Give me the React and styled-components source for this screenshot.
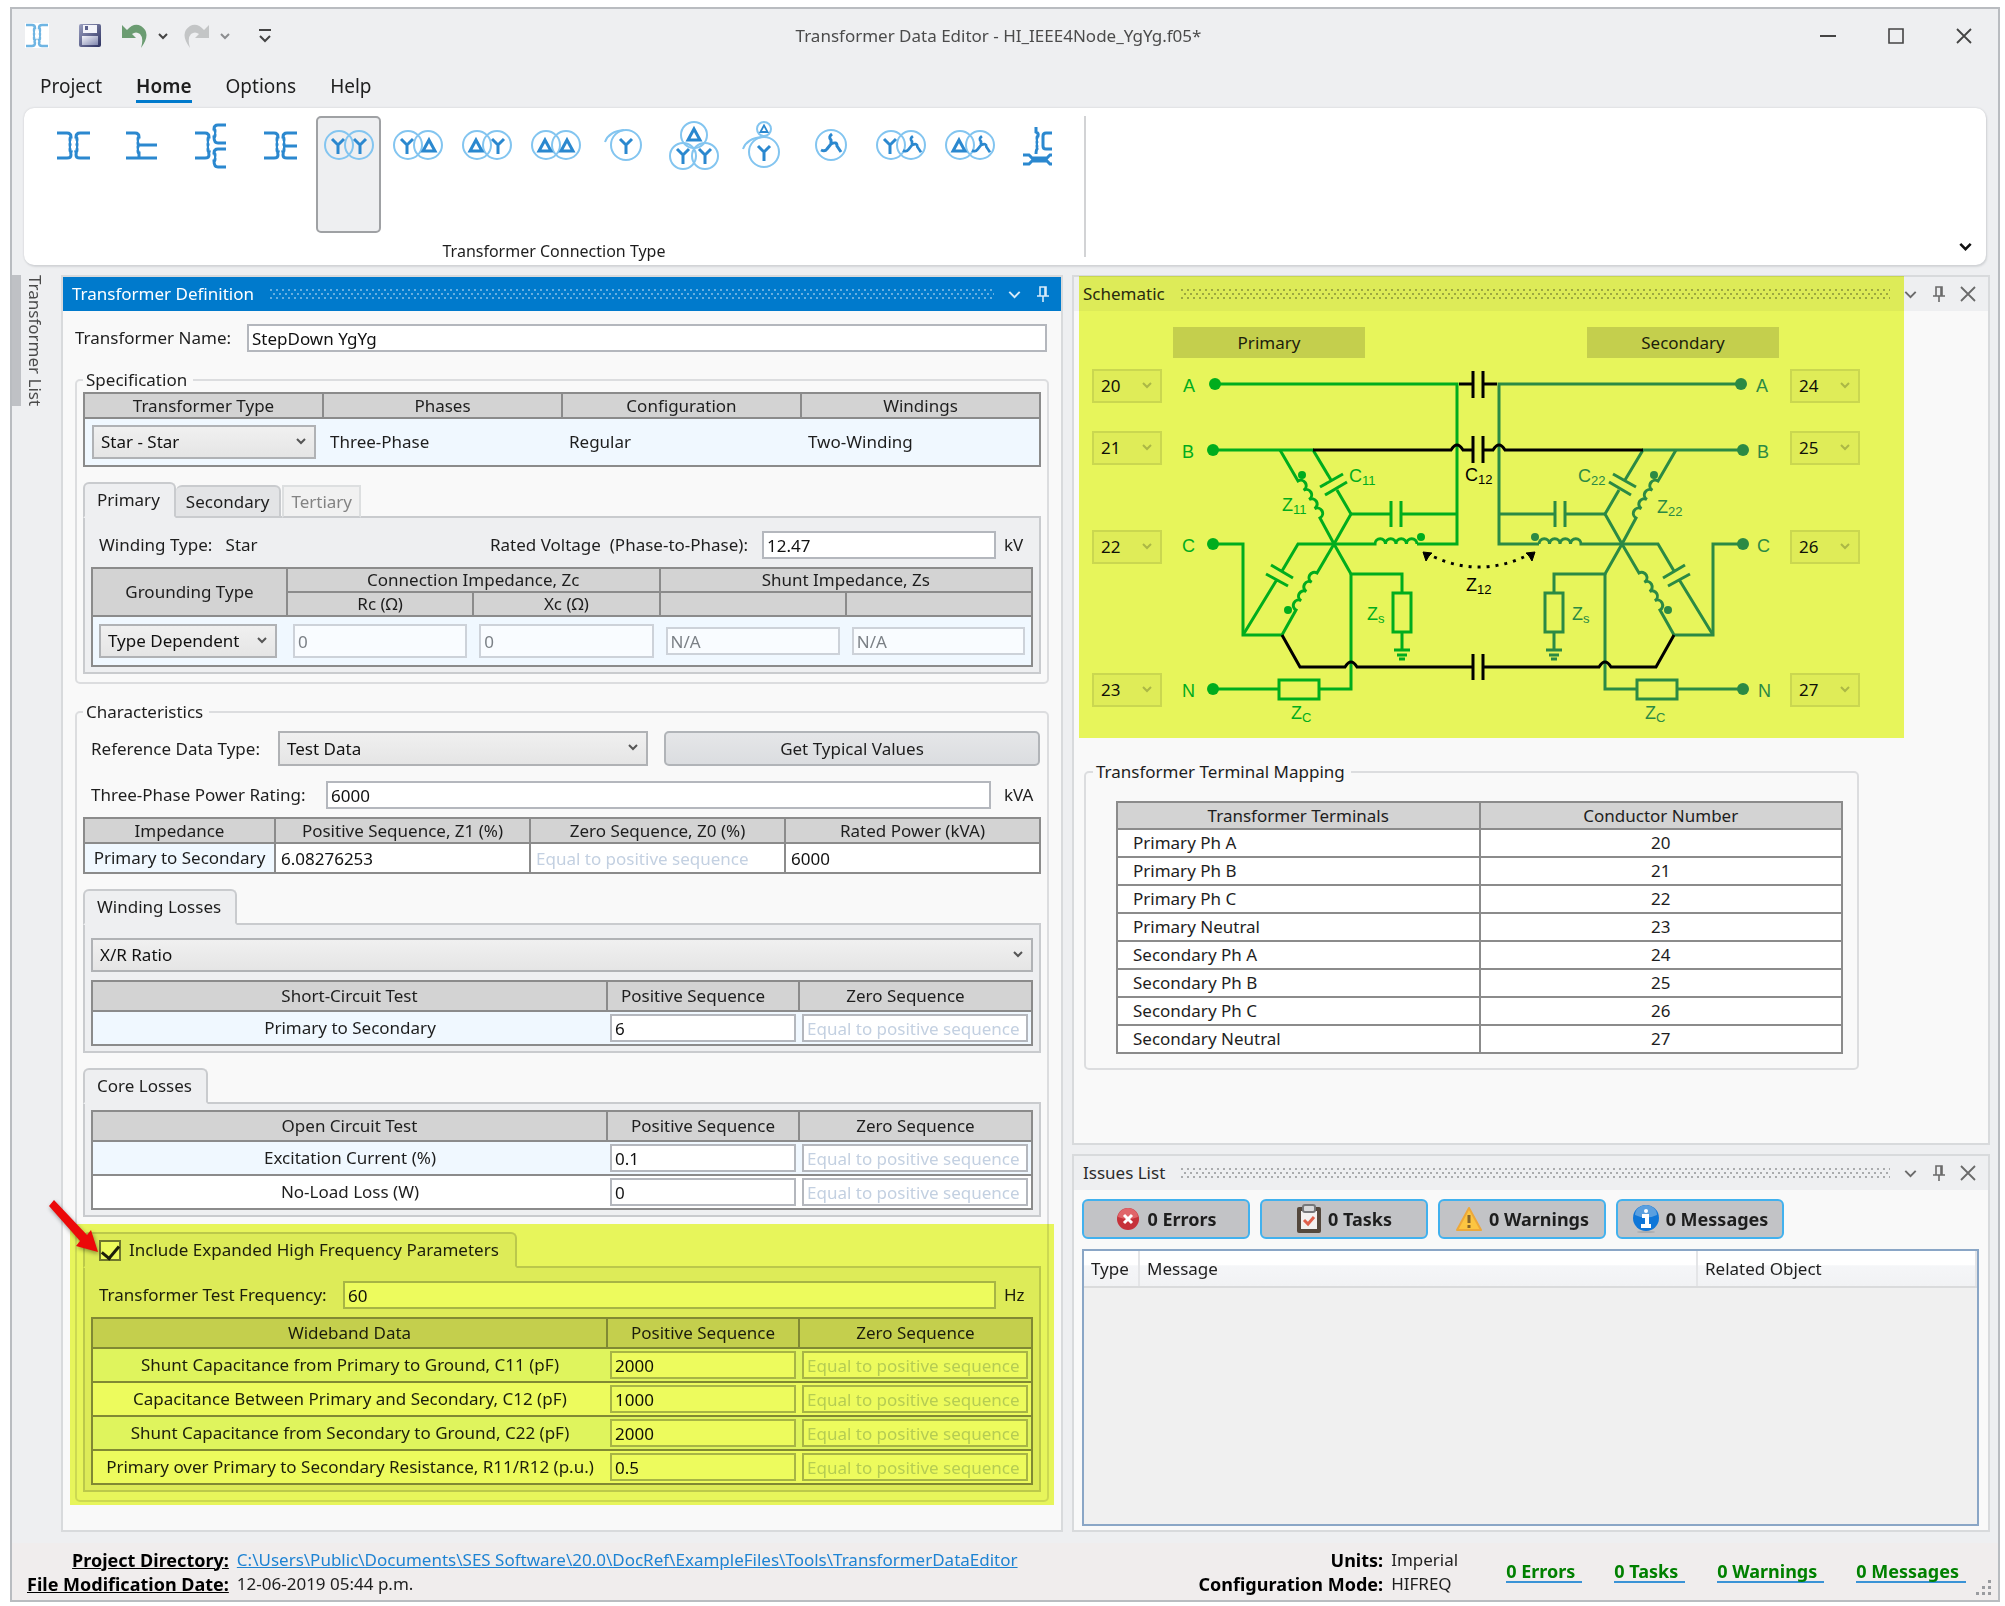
import React from 'react';
import styled, { createGlobalStyle, css } from 'styled-components';

const GlobalStyle = createGlobalStyle`
  * {
    box-sizing: border-box;
  }
  body {
    margin: 0;
    background: #fff;
    color: #1e1e1e;
    font: 17px/24px 'Noto Sans', 'Open Sans', sans-serif;
  }
  button, input, select {
    margin: 0;
    font: inherit;
    color: inherit;
  }
`;

const Window = styled.div`
  display: flex;
  flex-direction: column;
  min-height: calc(100vh - 11px);
  margin: 7px 5px 4px 10px;
  border: 2px solid #b9bcc0;
  background: #eeeff1;
`;

/* ---------- title bar ---------- */

const TitleBar = styled.header`
  display: grid;
  grid-template-columns: 1fr auto 1fr;
  align-items: center;
  height: 53px;
  padding: 0 26px 0 13px;
`;

const Title = styled.h1`
  margin: 0;
  font-size: 17px;
  font-weight: 400;
  color: #4b4b4b;
`;

const QuickAccess = styled.div`
  display: flex;
  align-items: center;
`;

const WindowButtons = styled.div`
  display: flex;
  justify-content: flex-end;
  gap: 52px;
`;

const IconButton = styled.button`
  display: flex;
  padding: 0;
  margin-left: ${props => props.$space || 0}px;
  border: 0;
  background: none;
  color: ${props => props.$color || '#444'};
`;

const Tabs = styled.nav`
  display: flex;
  gap: 34px;
  padding: 12px 28px 5px;
`;

const TabLink = styled.button`
  padding: 0 0 2px;
  border: 0;
  border-bottom: 3px solid ${props => (props.$active ? '#007acc' : 'transparent')};
  background: none;
  font-size: 19px;
  line-height: 24px;
  font-weight: ${props => (props.$active ? 600 : 400)};
`;

/* ---------- ribbon ---------- */

const Ribbon = styled.section`
  display: flex;
  justify-content: space-between;
  margin: 0 12px 10px;
  height: 157px;
  padding: 8px 14px 8px 0;
  border-radius: 10px;
  background: #fff;
  box-shadow: 0 0 2px #c4c6ca, 1px 2px 2px #d5d7da;
`;

const RibbonGroup = styled.div`
  display: flex;
  flex-direction: column;
  width: 1062px;
  border-right: 2px solid #d2d3d5;
`;

const RibbonItems = styled.div`
  display: flex;
  gap: 4px;
  padding-left: 16px;
`;

const RibbonButton = styled.button`
  display: flex;
  align-items: flex-start;
  justify-content: center;
  width: 65px;
  height: 117px;
  padding: 2px 0 0;
  border: 2px solid transparent;
  border-radius: 5px;
  background: none;
  ${props =>
    props.$selected &&
    css`
      border-color: #9fa1a4;
      background: #eeeff1;
    `}
`;

const RibbonLabel = styled.div`
  padding-top: 6px;
  font-size: 16px;
  line-height: 24px;
  text-align: center;
`;

const RibbonToggle = styled(IconButton)`
  align-self: flex-end;
  padding-bottom: 4px;
`;

/* ---------- docking layout ---------- */

const Workspace = styled.main`
  display: grid;
  grid-template-columns: 49px minmax(0, 1002fr) minmax(0, 927fr);
  flex: 1;
  padding-right: 8px;
`;

const SideTab = styled.button`
  align-self: start;
  justify-self: start;
  padding: 0 0 0 2px;
  border: 0;
  border-left: 9px solid #bfc1c5;
  background: none;
  writing-mode: vertical-rl;
  line-height: 24px;
  color: #4b4b4b;
`;

const RightColumn = styled.div`
  display: flex;
  flex-direction: column;
  gap: 9px;
  margin-left: 9px;
`;

const Panel = styled.section`
  position: relative;
  display: flex;
  flex-direction: column;
  flex: ${props => (props.$grow ? 1 : 'none')};
  border: 2px solid #d8dadc;
  background: #f9f9f9;
`;

const PanelHeader = styled.header`
  display: flex;
  align-items: center;
  height: 34px;
  padding: 0 12px 0 9px;
  background: ${props => (props.$active ? '#007acc' : '#eeeff1')};
  color: ${props => (props.$active ? '#fff' : '#2b2b2b')};
`;

const PanelTitle = styled.h2`
  margin: 0;
  font-size: 17px;
  font-weight: 400;
`;

const Grip = styled.div`
  --dot: ${props => (props.$active ? '#66aee0' : '#a9abad')};
  flex: 1;
  height: 10px;
  margin: 0 14px 0 16px;
  background-image: radial-gradient(circle at 1px 1px, var(--dot) 1px, transparent 1px),
    radial-gradient(circle at 1px 1px, var(--dot) 1px, transparent 1px);
  background-size: 6px 8px;
  background-position: 0 0, 3px 4px;
`;

const DefinitionBody = styled.div`
  display: flex;
  flex-direction: column;
  gap: 16px;
  padding: 13px 12px 28px;
`;

const Highlight = styled.div`
  position: absolute;
  background: #edfb5d;
  mix-blend-mode: multiply;
  pointer-events: none;
`;

const ParameterHighlight = styled(Highlight)`
  inset: -8px -13px -13px;
`;

const SchematicHighlight = styled(Highlight)`
  top: -1px;
  left: 5px;
  width: 825px;
  height: 462px;
`;

/* ---------- form parts ---------- */

const Group = styled.fieldset`
  min-width: 0;
  margin: 0;
  padding: ${props => props.$top || 0}px 6px 8px;
  border: 2px solid #dcdddf;
  border-radius: 5px;
`;

const Legend = styled.legend`
  padding: 0 6px 0 3px;
  line-height: 24px;
`;

const Row = styled.div`
  display: flex;
  align-items: center;
  padding: 0 ${props => props.$end || 0}px 0 ${props => props.$inset || 0}px;
  margin-bottom: ${props => props.$after || 0}px;
`;

const Label = styled.label`
  flex: none;
  width: ${props => (props.$width ? `${props.$width}px` : 'auto')};
  margin-right: ${props => (props.$width ? 0 : 14)}px;
`;

const Value = styled.span`
  flex: 1;
`;

const Unit = styled.span`
  width: ${props => (props.$wide ? 37 : 29)}px;
  margin-left: ${props => (props.$wide ? 13 : 8)}px;
`;

const TextBox = styled.input`
  flex: ${props => (props.$width ? 'none' : 1)};
  width: ${props => (props.$width ? `${props.$width}px` : '100%')};
  min-width: 0;
  height: 28px;
  padding: 0 2px 0 3px;
  border: 2px solid #b4b7bd;
  background: #fff;
  color: #111;

  &::placeholder {
    color: #c3d0e1;
    opacity: 1;
  }
  &:disabled {
    height: ${props => (props.$tall ? 34 : 28)}px;
    border-color: #cdd2d9;
    background: #f9fcff;
    color: #7b8086;
  }
`;

const SelectWrap = styled.span`
  position: relative;
  display: block;
  flex: none;
  width: ${props => (props.$width ? `${props.$width}px` : '100%')};
  height: ${props => props.$height || 34}px;

  svg {
    position: absolute;
    top: 11px;
    right: 10px;
    pointer-events: none;
    color: ${props => (props.$disabled ? '#b9bbbd' : '#555')};
  }
`;

const NativeSelect = styled.select`
  appearance: none;
  width: 100%;
  height: 100%;
  padding: 0 24px 0 7px;
  border: 2px solid #b0b2b5;
  border-radius: 0;
  background: linear-gradient(#f0f0f0, #e5e5e5);
  color: #111;

  &:disabled {
    border-color: #dadbdc;
    background: #f0f0f0;
    opacity: 1;
  }
`;

const PushButton = styled.button`
  flex: 1;
  height: 35px;
  margin-left: 16px;
  border: 2px solid #b1b4b8;
  border-radius: 5px;
  background: linear-gradient(#e5e6e8, #dbdde0);
`;

const TabStrip = styled.div`
  position: relative;
  display: flex;
  align-items: flex-end;
  height: 36px;
  margin: 15px 0 -2px;
`;

const PageTab = styled.button`
  height: ${props => (props.$active ? 36 : 33)}px;
  padding: ${props => (props.$active ? '0 14px 0 12px' : '0 10px')};
  border: 2px solid #c9cbce;
  border-bottom-color: ${props => (props.$active ? '#eeeff1' : '#c9cbce')};
  border-left-width: ${props => (props.$follows ? 0 : 2)}px;
  border-radius: 6px 6px 0 0;
  background: ${props => (props.$active ? '#eeeff1' : '#e3e4e6')};

  &:disabled {
    height: 33px;
    padding: 0 7px;
    margin-left: 1px;
    border-color: #dddfe0 #dddfe0 #c9cbce;
    border-radius: 0;
    background: #f1f1f1;
    color: #838383;
  }
`;

const CheckTab = styled.div`
  display: flex;
  align-items: center;
  height: 36px;
  padding: 0 16px 0 14px;
  border: 2px solid #c9cbce;
  border-bottom-color: #eeeff1;
  border-radius: 6px 6px 0 0;
  background: #eeeff1;
`;

const CheckBox = styled.input`
  appearance: none;
  display: flex;
  justify-content: center;
  width: 22px;
  height: 21px;
  margin-right: 8px;
  border: 2px solid #77797b;
  background: #fff;

  &:checked::after {
    content: '';
    width: 8px;
    height: 14px;
    border: solid #1e1e1e;
    border-width: 0 3px 3px 0;
    transform: rotate(40deg);
  }
`;

const TabPage = styled.div`
  padding: ${props => (props.$tight ? 6 : 13)}px 6px 5px;
  border: 2px solid #c9cbce;
  background: #eeeff1;
`;

const ParameterSection = styled.div`
  position: relative;
`;

/* ---------- tables ---------- */

const Grid = styled.table`
  width: 100%;
  table-layout: fixed;
  border-collapse: collapse;
  border: 2px solid #8b8b8b;

  th {
    height: ${props => props.$head || 25}px;
    padding: 0;
    border: 2px solid #8b8b8b;
    background: #d3d3d3;
    font-weight: 400;
    line-height: 22px;
    text-align: center;
  }
  td {
    height: ${props => props.$row || 34}px;
    padding: 0 ${props => props.$cellPad || 0}px;
    border: solid #8b8b8b;
    border-width: 2px ${props => (props.$ruled ? 2 : 0)}px;
    text-align: ${props => props.$align || 'left'};
    line-height: 24px;
  }
  tbody tr {
    background: #fff;
  }
  tbody tr:nth-child(odd) {
    background: ${props => (props.$plain ? '#fff' : '#f0f8ff')};
  }
`;

const Col = styled.col`
  width: ${props => props.$w};
`;

const ImpedanceGrid = styled(Grid)`
  td:first-child {
    text-align: center;
  }
  td + td {
    background: #fff;
  }
  input {
    display: block;
    border-color: transparent;
  }
`;

const SequenceGrid = styled(Grid)`
  th + th {
    padding-right: ${props => (props.$offset ? 20 : 0)}px;
  }
  td:first-child {
    text-align: center;
  }
  td + td {
    padding: 0 3px;
    text-align: left;
  }
  input {
    display: block;
  }
`;

const Spaced = styled.div`
  margin-bottom: 8px;
`;

/* ---------- schematic ---------- */

const Captions = styled.div`
  display: flex;
  justify-content: space-between;
  width: 768px;
  margin: 16px 0 3px 18px;
  padding: 0 81px;
`;

const Caption = styled.div`
  width: 192px;
  line-height: 31px;
  text-align: center;
  background: #d3d3d3;
`;

const Diagram = styled.div`
  display: flex;
  width: 768px;
  margin: 0 0 30px 18px;
`;

const Terminals = styled.div`
  display: grid;
  grid-template-rows: 62px 99px 143px 34px;
  width: 70px;
  padding-top: 8px;
`;

const MappingGroup = styled(Group)`
  width: 775px;
  margin: 0 0 73px 10px;
  padding: 0 7px 14px;
`;

const MappingGrid = styled(Grid)`
  width: calc(100% - 30px);
  margin: 17px 7px 0 23px;

  td {
    padding-left: 15px;
  }
  td + td {
    padding: 0;
    text-align: center;
  }
`;

/* ---------- issues ---------- */

const IssueFilters = styled.div`
  display: flex;
  gap: 10px;
  padding: 9px 8px 10px;
`;

const IssueButton = styled.button`
  display: flex;
  align-items: center;
  justify-content: center;
  gap: 6px;
  width: 168px;
  height: 40px;
  padding: 0;
  border: 2px solid #41b1ee;
  border-radius: 6px;
  background: #c2c3c6;
  font-weight: 700;
  font-size: 18px;
`;

const IssueList = styled.div`
  flex: 1;
  margin: 0 9px 4px 8px;
  border: 2px solid #8aa6c6;
  background: #f0f0f0;
`;

const IssueTable = styled.table`
  width: 100%;
  table-layout: fixed;
  border-collapse: collapse;

  th {
    height: 36px;
    padding: 0 7px;
    border-right: 2px solid #e4e5e7;
    border-bottom: 2px solid #dadbdc;
    background: linear-gradient(#fff 40%, #f5f6f8 42%, #f1f2f4);
    font-weight: 400;
    text-align: left;
  }
`;

/* ---------- status bar ---------- */

const StatusBar = styled.footer`
  display: flex;
  align-items: center;
  height: 57px;
  margin-top: 11px;
  padding: 0 6px 0 15px;
  background: #f0eded;
`;

const Facts = styled.dl`
  display: grid;
  grid-template-columns: auto auto;
  column-gap: 8px;
  margin: 0;
  margin-right: ${props => (props.$fill ? 'auto' : 0)};

  dt {
    font-weight: 700;
    font-size: 18px;
    text-align: right;
    text-decoration: ${props => (props.$fill ? 'underline' : 'none')};
    color: #000;
  }
  dd {
    margin: 0;
  }
  a {
    color: #1e83d3;
  }
`;

const StatusLinks = styled.div`
  display: flex;
  gap: 32px;
  margin-left: 48px;
`;

const StatusLink = styled.a`
  padding-right: 7px;
  border-bottom: 2px solid #3a93d6;
  font-weight: 700;
  font-size: 18px;
  line-height: 20px;
  color: #008000;
  text-decoration: none;
`;

const SizeGrip = styled.svg`
  align-self: flex-end;
  margin: 0 0 4px 10px;
`;

/* ---------- small drawings ---------- */

const Chevron = ({ size = 10, weight = 2 }) => (
  <svg width={size} height={size} viewBox="0 0 10 10" fill="none" stroke="currentColor" strokeWidth={weight}>
    <path d="M1 3l4 4 4-4" />
  </svg>
);

const Pin = () => (
  <svg width="12" height="18" viewBox="0 0 12 18" fill="none" stroke="currentColor" strokeWidth="1.6">
    <path d="M3 11V2h6v9M0 11h12M6 11v6M8 2v9" />
  </svg>
);

const Cross = ({ size = 16 }) => (
  <svg width={size} height={size} viewBox="0 0 16 16" stroke="currentColor" strokeWidth="1.8">
    <path d="M1 1l14 14M15 1L1 15" />
  </svg>
);

const AppIcon = () => (
  <svg width="24" height="25" viewBox="0 0 24 25" fill="none" stroke="#6fb5e3" strokeWidth="2.4">
    <rect width="24" height="25" fill="#fff" stroke="none" />
    <path d="M1 2h6q3 0 3 3a1 2 0 0 0 0 4a1 2 0 0 0 0 4a1 2 0 0 0 0 4a1 2 0 0 0 0 3q0 3-3 3H1" />
    <path d="M23 2h-6q-3 0-3 3a1 2 0 0 1 0 4a1 2 0 0 1 0 4a1 2 0 0 1 0 4a1 2 0 0 1 0 3q0 3 3 3h6" />
  </svg>
);

const SaveIcon = () => (
  <svg width="22" height="23" viewBox="0 0 22 23">
    <defs>
      <linearGradient id="disk" x1="0" x2="1" y1="0" y2="1">
        <stop offset="0" stopColor="#9a9fc0" />
        <stop offset="1" stopColor="#2c3160" />
      </linearGradient>
      <linearGradient id="plate" x1="0" x2="1" y1="0" y2="1">
        <stop offset="0" stopColor="#f4f5fb" />
        <stop offset="1" stopColor="#7f86ae" />
      </linearGradient>
    </defs>
    <rect width="22" height="23" rx="2" fill="url(#disk)" />
    <rect x="4" y="1" width="14" height="8" fill="#f3f4fa" />
    <rect x="6" y="2" width="3" height="4" fill="#5a608c" />
    <rect x="3" y="12" width="16" height="9" fill="url(#plate)" />
  </svg>
);

const Turn = ({ flip }) => (
  <svg width="25" height="24" viewBox="0 0 25 24">
    <path
      transform={flip ? 'translate(25 0) scale(-1 1)' : undefined}
      fill="currentColor"
      d="M0 1l5 5Q12-2 19 2q11 7 0 22 3-10-1-14-4-3-8 0l4 4H0z"
    />
  </svg>
);

const PALE = '#83c5f0';
const DEEP = '#2b88cf';

const Ring = ({ x, y, r = 14 }) => <circle cx={x} cy={y} r={r} stroke={PALE} strokeWidth="2" />;

const Wye = ({ x, y }) => (
  <path transform={`translate(${x} ${y})`} d="M-6-6L0 0l6-6M0 0v9" stroke={DEEP} strokeWidth="3" />
);

const Delta = ({ x, y, k = 1 }) => (
  <path transform={`translate(${x} ${y}) scale(${k})`} d="M0-6l6 11H-6z" stroke={DEEP} strokeWidth="3" />
);

const Zigzag = ({ x, y, k = 1 }) => (
  <path
    transform={`translate(${x} ${y}) scale(${k})`}
    d="M1-11Q-3-8 0-5V-1L-4 4Q-6 7-10 5M0-1Q6-4 6 1L10 7"
    stroke={DEEP}
    strokeWidth="3"
  />
);

const LEFT_COIL = 'M9 13h10q4 0 4 4a1 2.500 0 0 0 0 5a1 2.500 0 0 0 0 5a1 2.500 0 0 0 0 5a1 2.500 0 0 0 0 3q0 3-4 3H9';
const RIGHT_COIL = 'M42 13H32q-4 0-4 4a1 2.500 0 0 1 0 5a1 2.500 0 0 1 0 5a1 2.500 0 0 1 0 5a1 2.500 0 0 1 0 3q0 3 4 3h10';

const Lines = ({ d }) => <path d={d} stroke={DEEP} strokeWidth="3" />;

const connections = [
  { name: 'Single-Phase', art: <Lines d={LEFT_COIL + RIGHT_COIL} /> },
  {
    name: 'Autotransformer',
    art: <Lines d="M9 13h9q4 0 4 4a1 2 0 0 0 0 4a1 2 0 0 0 0 4a1 2 0 0 0 0 4a1 2 0 0 0 0 4v5M22 25h18M9 38h31" />,
  },
  {
    name: 'Three-Winding',
    art: (
      <Lines
        d={`${LEFT_COIL}M40 5H32q-4 0-4 4a1 2 0 0 1 0 4a1 2 0 0 1 0 4q0 6 4 6h8M40 29h-8q-4 0-4 4a1 2 0 0 1 0 4a1 2 0 0 1 0 4q0 6 4 6h8`}
      />
    ),
  },
  { name: 'Centre-Tapped', art: <Lines d={`${LEFT_COIL}${RIGHT_COIL}M28 26h14`} /> },
  { name: 'Star - Star', art: <><Ring x={15} y={25} /><Ring x={35} y={25} /><Wye x={14} y={25} /><Wye x={36} y={25} /></> },
  { name: 'Star - Delta', art: <><Ring x={15} y={25} /><Ring x={35} y={25} /><Wye x={14} y={25} /><Delta x={36} y={26} /></> },
  { name: 'Delta - Star', art: <><Ring x={15} y={25} /><Ring x={35} y={25} /><Delta x={14} y={26} /><Wye x={36} y={25} /></> },
  { name: 'Delta - Delta', art: <><Ring x={15} y={25} /><Ring x={35} y={25} /><Delta x={14} y={26} /><Delta x={36} y={26} /></> },
  {
    name: 'Star Auto',
    art: <><Ring x={26} y={25} r={15} /><path d="M5 22Q9 11 24 10" stroke={PALE} strokeWidth="2" /><Wye x={26} y={25} /></>,
  },
  {
    name: 'Star - Star - Delta',
    art: (
      <>
        <Ring x={25} y={15} r={13} /><Ring x={14} y={36} r={13} /><Ring x={36} y={36} r={13} />
        <Delta x={25} y={15} /><Wye x={14} y={35} /><Wye x={36} y={35} />
      </>
    ),
  },
  {
    name: 'Star Auto - Delta',
    art: (
      <>
        <Ring x={26} y={9} r={7} /><Ring x={26} y={32} r={15} />
        <path d="M5 29Q9 18 24 17" stroke={PALE} strokeWidth="2" />
        <Delta x={26} y={9} k={0.6} /><Wye x={26} y={32} />
      </>
    ),
  },
  { name: 'Zigzag', art: <><Ring x={24} y={25} r={15} /><Zigzag x={24} y={25} /></> },
  { name: 'Star - Zigzag', art: <><Ring x={15} y={25} /><Ring x={35} y={25} /><Wye x={14} y={25} /><Zigzag x={36} y={26} k={0.9} /></> },
  { name: 'Delta - Zigzag', art: <><Ring x={15} y={25} /><Ring x={35} y={25} /><Delta x={14} y={26} /><Zigzag x={36} y={26} k={0.9} /></> },
  {
    name: 'Scott',
    art: (
      <Lines d="M22 7v5q3 1 2 4a1 2 0 0 0 0 4a1 2 0 0 0 0 4a1 2 0 0 0 0 4q-2 1-2 6M38 13h-6q-3 0-3 3v10q0 3 3 3h6M9 35h6l3 3h15l3-3h2M9 44h6l3-3h15l3 3h2" />
    ),
  },
];

/* ---------- controls ---------- */

const Select = ({ value, width, height, disabled, ...rest }) => (
  <SelectWrap $width={width} $height={height} $disabled={disabled}>
    <NativeSelect defaultValue={value} disabled={disabled} {...rest}>
      <option>{value}</option>
    </NativeSelect>
    <Chevron />
  </SelectWrap>
);

const DockHeader = ({ title, active, closable }) => (
  <PanelHeader $active={active}>
    <PanelTitle>{title}</PanelTitle>
    <Grip $active={active} />
    <IconButton $color={active ? '#d7ebf9' : '#6a6a6a'} aria-label="Panel menu">
      <Chevron size={13} weight={1.5} />
    </IconButton>
    <IconButton $space={16} $color={active ? '#d7ebf9' : '#6a6a6a'} aria-label="Pin panel">
      <Pin />
    </IconButton>
    {closable && (
      <IconButton $space={15} $color="#6a6a6a" aria-label="Close panel">
        <Cross />
      </IconButton>
    )}
  </PanelHeader>
);

const SequenceTable = ({ title, rows, offset }) => (
  <SequenceGrid $head={30} $row={34} $offset={offset}>
    <colgroup>
      <Col $w="515px" />
      <Col $w="192px" />
      <Col />
    </colgroup>
    <thead>
      <tr>
        <th>{title}</th>
        <th>Positive Sequence</th>
        <th>Zero Sequence</th>
      </tr>
    </thead>
    <tbody>
      {rows.map(([name, value]) => (
        <tr key={name}>
          <td>{name}</td>
          <td>
            <TextBox defaultValue={value} aria-label={`${name}, positive sequence`} />
          </td>
          <td>
            <TextBox placeholder="Equal to positive sequence" aria-label={`${name}, zero sequence`} />
          </td>
        </tr>
      ))}
    </tbody>
  </SequenceGrid>
);

/* ---------- schematic drawing ---------- */

// One side of the transformer; the secondary side is the same drawing mirrored.
const Winding = () => (
  <>
    <g fill="none" strokeWidth="3">
      <path d="M53 23h242v160h-40" />
      <path d="M51 89h100l18 30M158 126l23-13M163 134l22-13M175 129l14 24-17 30" />
      <path d="M118 89l18 31a5 5 0 0 1 5.500 9.250a5 5 0 0 1 5.500 9.250a5 5 0 0 1 5.500 9.250a5 5 0 0 1 5.500 9.250l14 26" />
      <path d="M189 153h40M229 140v26M239 140v26M239 153h56" />
      <path d="M172 183h41a5 5 0 0 1 10.500 0a5 5 0 0 1 10.500 0a5 5 0 0 1 10.500 0a5 5 0 0 1 10.500 0" />
      <path d="M172 183h-36l-16 27M109 204l22 13M104 213l22 12M114 220l-33 54" />
      <path d="M172 183l-17 29a5 5 0 0 0-5.250 9.250a5 5 0 0 0-5.250 9.250a5 5 0 0 0-5.250 9.250a5 5 0 0 0-5.250 9.250l-14 25H81V183H51" />
      <path d="M172 183l17 30h51v19M231 232h18v39h-18zM240 271v18M232 289h16M235 294h10M237 298h6" />
      <path d="M189 213v115h-32M117 319h40v19h-40zM117 328H51" />
    </g>
    <g stroke="none">
      <circle cx="53" cy="23" r="6" />
      <circle cx="51" cy="89" r="6" />
      <circle cx="51" cy="183" r="6" />
      <circle cx="51" cy="328" r="6" />
      <circle cx="140" cy="114" r="4" />
      <circle cx="259" cy="176" r="4" />
      <circle cx="126" cy="249" r="4" />
    </g>
  </>
);

const Tag = ({ x, y, sub, children }) => (
  <text x={x} y={y}>
    {children}
    {sub && (
      <tspan fontSize="13" dy="3">
        {sub}
      </tspan>
    )}
  </text>
);

const GREEN = '#00b04f';
const TEAL = '#2e8cb9';

const Circuit = () => (
  <svg width="628" height="369" viewBox="0 0 628 369" fontFamily="Liberation Sans, Arial, sans-serif" fontSize="18">
    <g stroke={GREEN} fill={GREEN}>
      <Winding />
    </g>
    <g stroke={TEAL} fill={TEAL} transform="translate(632 0) scale(-1 1)">
      <Winding />
    </g>
    <g stroke="#000" fill="none" strokeWidth="3">
      <path d="M297 23h14M311 10v27M321 10v27M321 23h14" />
      <path d="M151 89h138q6-10 12 0h10M311 75v27M321 75v27M321 89h10q6-10 12 0h138" />
      <path d="M120 274l18 32h45q6-10 12 0h116M311 293v26M321 293v26M321 306h116q6-10 12 0h45l18-32" />
      <path d="M272 196q45 20 90 0" strokeDasharray="3 6" />
      <path d="M261 191l9 1-3 3-3 5zM373 191l-9 1 3 3 3 5z" fill="#000" strokeWidth="1" />
    </g>
    <g fill={GREEN}>
      <Tag x={21} y={31}>A</Tag>
      <Tag x={20} y={97}>B</Tag>
      <Tag x={20} y={191}>C</Tag>
      <Tag x={20} y={336}>N</Tag>
      <Tag x={120} y={150} sub="11">Z</Tag>
      <Tag x={187} y={121} sub="11">C</Tag>
      <Tag x={205} y={259} sub="s">Z</Tag>
      <Tag x={129} y={358} sub="C">Z</Tag>
    </g>
    <g fill="#000">
      <Tag x={303} y={120} sub="12">C</Tag>
      <Tag x={304} y={230} sub="12">Z</Tag>
    </g>
    <g fill={TEAL}>
      <Tag x={594} y={31}>A</Tag>
      <Tag x={595} y={97}>B</Tag>
      <Tag x={595} y={191}>C</Tag>
      <Tag x={596} y={336}>N</Tag>
      <Tag x={416} y={121} sub="22">C</Tag>
      <Tag x={495} y={152} sub="22">Z</Tag>
      <Tag x={410} y={259} sub="s">Z</Tag>
      <Tag x={483} y={358} sub="C">Z</Tag>
    </g>
  </svg>
);

const mapping = [
  ['Primary Ph A', 20],
  ['Primary Ph B', 21],
  ['Primary Ph C', 22],
  ['Primary Neutral', 23],
  ['Secondary Ph A', 24],
  ['Secondary Ph B', 25],
  ['Secondary Ph C', 26],
  ['Secondary Neutral', 27],
];

const TerminalColumn = ({ rows }) => (
  <Terminals>
    {rows.map(([name, conductor]) => (
      <Select key={name} value={conductor} width={70} disabled aria-label={name} />
    ))}
  </Terminals>
);

/* ---------- issue icons ---------- */

const issues = [
  {
    label: '0 Errors',
    icon: (
      <svg width="26" height="26" viewBox="0 0 26 26">
        <circle cx="13" cy="13" r="11" fill="#c6323a" />
        <path d="M3 11a10 9 0 0 1 20 0q-10 4-20 0" fill="#e0656a" />
        <path d="M9 9l8 8M17 9l-8 8" stroke="#fff" strokeWidth="3" />
      </svg>
    ),
  },
  {
    label: '0 Tasks',
    icon: (
      <svg width="26" height="30" viewBox="0 0 26 30">
        <rect x="1" y="3" width="24" height="26" rx="2" fill="#54483d" />
        <rect x="5" y="7" width="16" height="18" fill="#f3f1f0" />
        <rect x="7" y="1" width="12" height="7" rx="2" fill="#d9dadb" stroke="#77787a" strokeWidth="2" />
        <path d="M8 16l4 4 6-7" stroke="#e0604c" strokeWidth="3" fill="none" />
      </svg>
    ),
  },
  {
    label: '0 Warnings',
    icon: (
      <svg width="28" height="26" viewBox="0 0 28 26">
        <path d="M14 2l12 22H2z" fill="#fcc541" stroke="#eda83a" strokeWidth="2" strokeLinejoin="round" />
        <path d="M14 9v8M14 19v3" stroke="#85642a" strokeWidth="3" />
      </svg>
    ),
  },
  {
    label: '0 Messages',
    icon: (
      <svg width="28" height="30" viewBox="0 0 28 30">
        <ellipse cx="14" cy="28" rx="9" ry="1" fill="#a9abae" />
        <circle cx="14" cy="14" r="13" fill="#0f76d8" />
        <path d="M3 11a11 10 0 0 1 22 0q-11 5-22 0" fill="#5a9fdf" />
        <path d="M10 12h5v9M9 22h10" stroke="#fff" strokeWidth="4" fill="none" />
        <circle cx="14" cy="7" r="2" fill="#fff" />
      </svg>
    ),
  },
];

const Arrow = styled.svg`
  position: absolute;
  top: -33px;
  left: -34px;
  filter: drop-shadow(1px 2px 2px rgba(0, 0, 0, 0.4));
`;

/* ---------- panels ---------- */

const Definition = () => (
  <Panel>
    <DockHeader title="Transformer Definition" active />
    <DefinitionBody>
      <Row $end={2}>
        <Label htmlFor="name" $width={172}>Transformer Name:</Label>
        <TextBox id="name" defaultValue="StepDown YgYg" />
      </Row>

      <Group>
        <Legend>Specification</Legend>
        <Grid $row={48} $cellPad={7}>
          <thead>
            <tr>
              <th>Transformer Type</th>
              <th>Phases</th>
              <th>Configuration</th>
              <th>Windings</th>
            </tr>
          </thead>
          <tbody>
            <tr>
              <td>
                <Select value="Star - Star" aria-label="Transformer Type" />
              </td>
              <td>Three-Phase</td>
              <td>Regular</td>
              <td>Two-Winding</td>
            </tr>
          </tbody>
        </Grid>

        <TabStrip>
          <PageTab $active>Primary</PageTab>
          <PageTab $follows>Secondary</PageTab>
          <PageTab disabled>Tertiary</PageTab>
        </TabStrip>
        <TabPage>
          <Row $inset={8} $after={8}>
            <Value>Winding Type:&nbsp;&nbsp; Star</Value>
            <Label htmlFor="voltage">Rated Voltage&nbsp; (Phase-to-Phase):</Label>
            <TextBox id="voltage" defaultValue="12.47" $width={234} />
            <Unit>kV</Unit>
          </Row>
          <Grid $head={24} $row={50} $cellPad={6}>
            <colgroup>
              <Col $w="195px" />
              <Col />
              <Col />
              <Col />
              <Col />
            </colgroup>
            <thead>
              <tr>
                <th rowSpan={2}>Grounding Type</th>
                <th colSpan={2}>Connection Impedance, Zc</th>
                <th colSpan={2}>Shunt Impedance, Zs</th>
              </tr>
              <tr>
                <th>Rc (Ω)</th>
                <th>Xc (Ω)</th>
                <th />
                <th />
              </tr>
            </thead>
            <tbody>
              <tr>
                <td>
                  <Select value="Type Dependent" width={178} aria-label="Grounding Type" />
                </td>
                <td><TextBox $tall disabled defaultValue="0" aria-label="Rc" /></td>
                <td><TextBox $tall disabled defaultValue="0" aria-label="Xc" /></td>
                <td><TextBox disabled defaultValue="N/A" aria-label="Shunt resistance" /></td>
                <td><TextBox disabled defaultValue="N/A" aria-label="Shunt reactance" /></td>
              </tr>
            </tbody>
          </Grid>
        </TabPage>
      </Group>

      <Group $top={7}>
        <Legend>Characteristics</Legend>
        <Row $inset={8} $after={15} $end={1}>
          <Label htmlFor="reference" $width={187}>Reference Data Type:</Label>
          <Select id="reference" value="Test Data" width={370} height={35} />
          <PushButton>Get Typical Values</PushButton>
        </Row>
        <Row $inset={8} $after={8}>
          <Label htmlFor="rating" $width={235}>Three-Phase Power Rating:</Label>
          <TextBox id="rating" defaultValue="6000" />
          <Unit $wide>kVA</Unit>
        </Row>
        <ImpedanceGrid $row={30} $ruled>
          <colgroup>
            <Col $w="191px" />
            <Col />
            <Col />
            <Col />
          </colgroup>
          <thead>
            <tr>
              <th>Impedance</th>
              <th>Positive Sequence, Z1 (%)</th>
              <th>Zero Sequence, Z0 (%)</th>
              <th>Rated Power (kVA)</th>
            </tr>
          </thead>
          <tbody>
            <tr>
              <td>Primary to Secondary</td>
              <td><TextBox defaultValue="6.08276253" aria-label="Positive Sequence, Z1" /></td>
              <td><TextBox placeholder="Equal to positive sequence" aria-label="Zero Sequence, Z0" /></td>
              <td><TextBox defaultValue="6000" aria-label="Rated Power" /></td>
            </tr>
          </tbody>
        </ImpedanceGrid>

        <TabStrip>
          <PageTab $active>Winding Losses</PageTab>
        </TabStrip>
        <TabPage>
          <Spaced>
            <Select value="X/R Ratio" aria-label="Winding loss input" />
          </Spaced>
          <SequenceTable title="Short-Circuit Test" rows={[['Primary to Secondary', '6']]} offset />
        </TabPage>

        <TabStrip>
          <PageTab $active>Core Losses</PageTab>
        </TabStrip>
        <TabPage $tight>
          <SequenceTable
            title="Open Circuit Test"
            rows={[['Excitation Current (%)', '0.1'], ['No-Load Loss (W)', '0']]}
          />
        </TabPage>

        <ParameterSection>
          <TabStrip>
            <CheckTab>
              <CheckBox id="expanded" type="checkbox" defaultChecked />
              <label htmlFor="expanded">Include Expanded High Frequency Parameters</label>
            </CheckTab>
          </TabStrip>
          <TabPage>
            <Row $inset={8} $after={8}>
              <Label htmlFor="frequency" $width={244}>Transformer Test Frequency:</Label>
              <TextBox id="frequency" defaultValue="60" />
              <Unit>Hz</Unit>
            </Row>
            <SequenceTable
              title="Wideband Data"
              rows={[
                ['Shunt Capacitance from Primary to Ground, C11 (pF)', '2000'],
                ['Capacitance Between Primary and Secondary, C12 (pF)', '1000'],
                ['Shunt Capacitance from Secondary to Ground, C22 (pF)', '2000'],
                ['Primary over Primary to Secondary Resistance, R11/R12 (p.u.)', '0.5'],
              ]}
            />
          </TabPage>
          <ParameterHighlight />
          <Arrow width="50" height="54" viewBox="0 0 50 54">
            <path d="M5 1L0 7l31 35-4 5 22 6-7-22-4 5z" fill="#ec0909" />
          </Arrow>
        </ParameterSection>
      </Group>
    </DefinitionBody>
  </Panel>
);

const Schematic = () => (
  <Panel>
    <DockHeader title="Schematic" closable />
    <Captions>
      <Caption>Primary</Caption>
      <Caption>Secondary</Caption>
    </Captions>
    <Diagram>
      <TerminalColumn rows={mapping.slice(0, 4)} />
      <Circuit />
      <TerminalColumn rows={mapping.slice(4)} />
    </Diagram>
    <SchematicHighlight />
    <MappingGroup>
      <Legend>Transformer Terminal Mapping</Legend>
      <MappingGrid $head={27} $row={28} $ruled $plain>
        <thead>
          <tr>
            <th>Transformer Terminals</th>
            <th>Conductor Number</th>
          </tr>
        </thead>
        <tbody>
          {mapping.map(([name, conductor]) => (
            <tr key={name}>
              <td>{name}</td>
              <td>{conductor}</td>
            </tr>
          ))}
        </tbody>
      </MappingGrid>
    </MappingGroup>
  </Panel>
);

const Issues = () => (
  <Panel $grow>
    <DockHeader title="Issues List" closable />
    <IssueFilters>
      {issues.map(({ label, icon }) => (
        <IssueButton key={label}>
          {icon}
          {label}
        </IssueButton>
      ))}
    </IssueFilters>
    <IssueList>
      <IssueTable>
        <colgroup>
          <Col $w="55px" />
          <Col $w="558px" />
          <Col />
        </colgroup>
        <thead>
          <tr>
            <th>Type</th>
            <th>Message</th>
            <th>Related Object</th>
          </tr>
        </thead>
      </IssueTable>
    </IssueList>
  </Panel>
);

const App = () => (
  <>
    <GlobalStyle />
    <Window>
      <TitleBar>
        <QuickAccess>
          <AppIcon />
          <IconButton $space={30} aria-label="Save"><SaveIcon /></IconButton>
          <IconButton $space={21} $color="#6b9c72" aria-label="Undo"><Turn /></IconButton>
          <IconButton $space={11} aria-label="Undo history"><Chevron /></IconButton>
          <IconButton $space={16} $color="#c3c5c6" aria-label="Redo"><Turn flip /></IconButton>
          <IconButton $space={11} $color="#8b8d8f" aria-label="Redo history"><Chevron /></IconButton>
          <IconButton $space={29} aria-label="Customize toolbar">
            <svg width="12" height="15" viewBox="0 0 12 15" fill="none" stroke="currentColor" strokeWidth="2">
              <path d="M0 2h12M1 8l5 5 5-5" />
            </svg>
          </IconButton>
        </QuickAccess>
        <Title>Transformer Data Editor - HI_IEEE4Node_YgYg.f05*</Title>
        <WindowButtons>
          <IconButton aria-label="Minimize">
            <svg width="16" height="16" stroke="currentColor" strokeWidth="2"><path d="M0 8h16" /></svg>
          </IconButton>
          <IconButton aria-label="Maximize">
            <svg width="16" height="16" fill="none" stroke="currentColor" strokeWidth="1.6"><path d="M1 1h14v14H1z" /></svg>
          </IconButton>
          <IconButton aria-label="Close"><Cross /></IconButton>
        </WindowButtons>
      </TitleBar>

      <Tabs>
        <TabLink>Project</TabLink>
        <TabLink $active>Home</TabLink>
        <TabLink>Options</TabLink>
        <TabLink>Help</TabLink>
      </Tabs>

      <Ribbon>
        <RibbonGroup>
          <RibbonItems>
            {connections.map(({ name, art }) => (
              <RibbonButton key={name} aria-label={name} $selected={name === 'Star - Star'}>
                <svg width="50" height="50" viewBox="0 0 50 50" fill="none">{art}</svg>
              </RibbonButton>
            ))}
          </RibbonItems>
          <RibbonLabel>Transformer Connection Type</RibbonLabel>
        </RibbonGroup>
        <RibbonToggle $color="#111" aria-label="Collapse ribbon"><Chevron size={13} /></RibbonToggle>
      </Ribbon>

      <Workspace>
        <SideTab>Transformer List</SideTab>
        <Definition />
        <RightColumn>
          <Schematic />
          <Issues />
        </RightColumn>
      </Workspace>

      <StatusBar>
        <Facts $fill>
          <dt>Project Directory:</dt>
          <dd>
            <a href="#directory">C:\Users\Public\Documents\SES Software\20.0\DocRef\ExampleFiles\Tools\TransformerDataEditor</a>
          </dd>
          <dt>File Modification Date:</dt>
          <dd>12-06-2019 05:44 p.m.</dd>
        </Facts>
        <Facts>
          <dt>Units:</dt>
          <dd>Imperial</dd>
          <dt>Configuration Mode:</dt>
          <dd>HIFREQ</dd>
        </Facts>
        <StatusLinks>
          {issues.map(({ label }) => (
            <StatusLink key={label} href="#issues">{label}</StatusLink>
          ))}
        </StatusLinks>
        <SizeGrip width="16" height="16" fill="#9a9ca0">
          <path d="M12 0h3v3h-3zM6 6h3v3H6zM12 6h3v3h-3zM0 12h3v3H0zM6 12h3v3H6zM12 12h3v3h-3z" />
        </SizeGrip>
      </StatusBar>
    </Window>
  </>
);

export default App;
